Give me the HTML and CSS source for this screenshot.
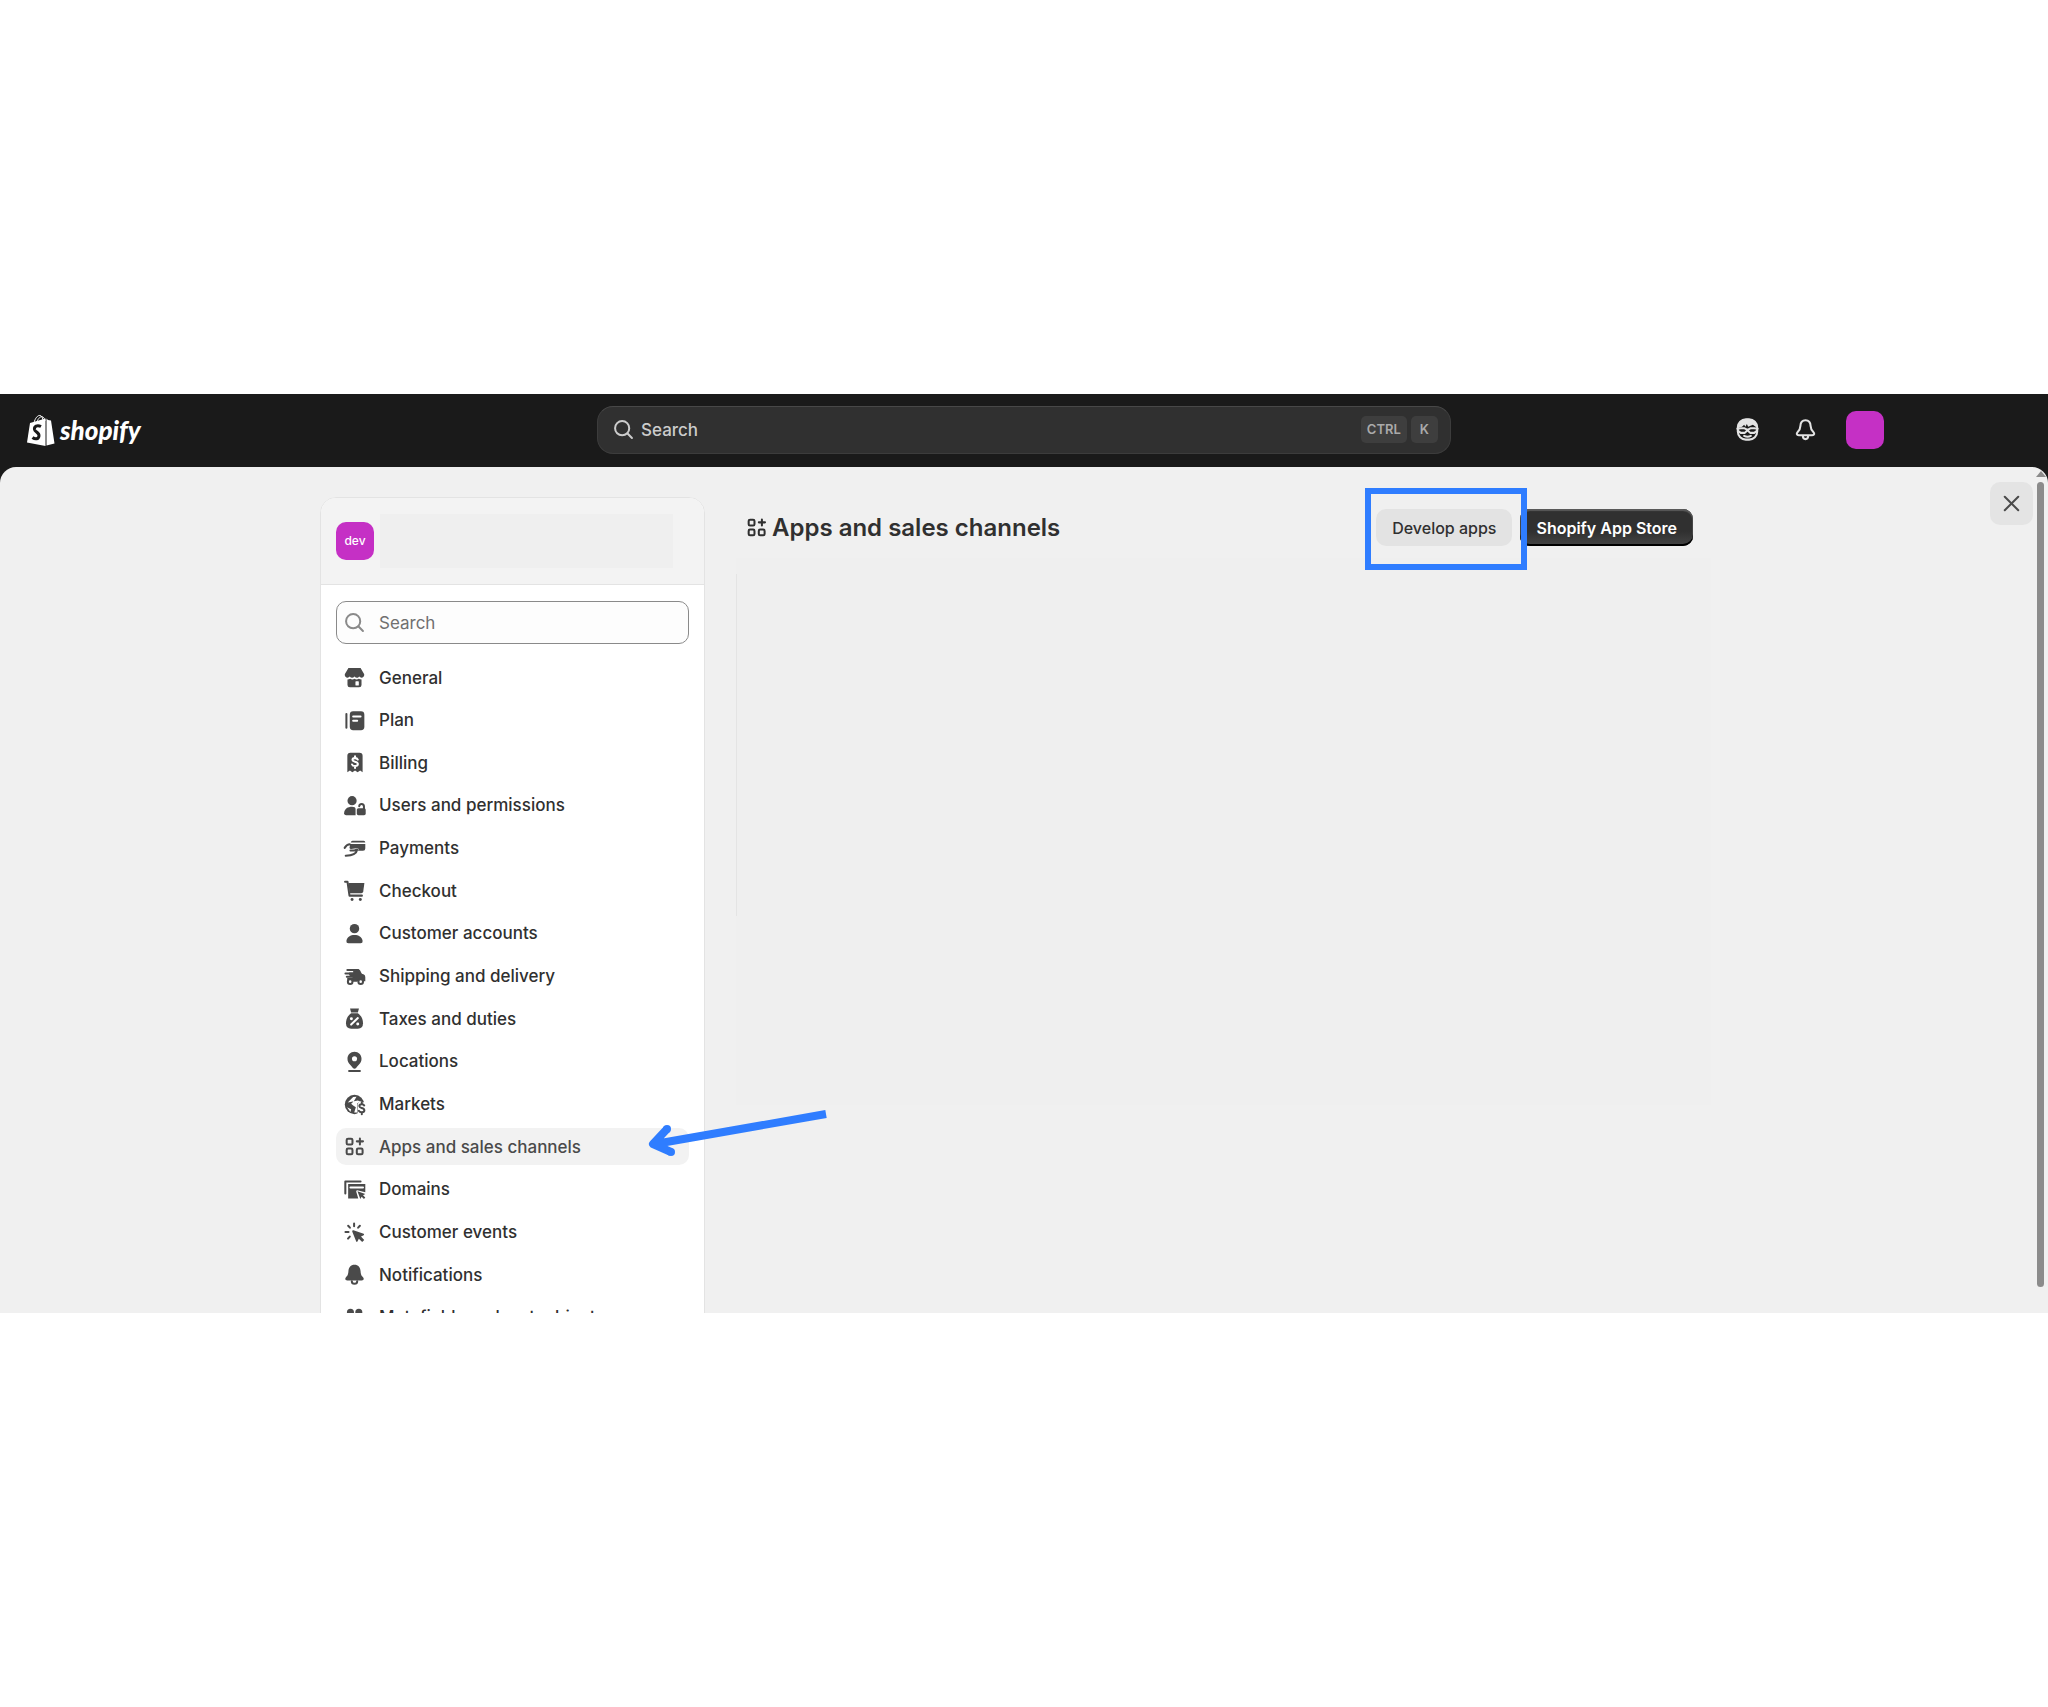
FILE: index.html
```html
<!DOCTYPE html>
<html lang="en">
<head>
  <meta charset="UTF-8" />
  <meta name="viewport" content="width=device-width, initial-scale=1.0"/>
  <title>Apps and sales channels</title>
  <link rel="stylesheet" href="styles.css">
</head>
<body>
  <div class="frame">
    <!-- Top Bar -->
    <header class="topbar">
      <a href="#" class="logo">
        <svg class="logo-bag" viewBox="0 0 28 32" aria-hidden="true">
          <path d="M7 9C8 4 11 1 13 1.500C15 2 16 4 16 8M10 8C11 4 14 2 16 3C17 4 18 5 18 7" fill="none" stroke="#fff" stroke-width="1"/>
          <path d="M3 9L18.500 4.500V32L0 28.500Z" fill="#fff"/>
          <path d="M19.500 4.500L21 6L24 6.500L27.500 29.500L19.500 31.500Z" fill="#fff"/>
          <path d="M14 12.500C10 10.500 7 12.500 7.500 15.500C8 18 12.500 18.500 12 22C11.500 25.500 8 25.500 5.500 23.500" fill="none" stroke="#1a1a1a" stroke-width="3"/>
        </svg>
        <span class="logo-text">shopify</span>
      </a>
      <button class="top-search" type="button">
        <svg class="icon" viewBox="0 0 20 20" aria-hidden="true"><circle cx="9" cy="9" r="5.250" class="line"/><path d="M13 13L16.250 16.250" class="line"/></svg>
        <span class="top-search-label">Search</span>
        <kbd>CTRL</kbd>
        <kbd>K</kbd>
      </button>
      <div class="top-actions">
        <button class="icon-button" type="button" aria-label="Assistant">
          <svg class="icon" viewBox="0 0 20 20" aria-hidden="true">
            <rect x="2.800" y="2.500" width="14.400" height="15" rx="6" class="line"/>
            <path d="M2.500 9V8C3 4 6 2 10 2S17 4 17.500 8V9L14 6.500L10.500 8L9.500 6L8.500 8L7.500 6.500L6 8Z"/>
            <path d="M2.500 9.500L5 9H7.500L10 10.300L12.500 9H15L17.500 9.500M10 10.500L8 12.500H5L3 11M10 10.500L12 12.500H15L17 11M7.500 14.700Q10 16 12.500 14.700" class="line"/>
          </svg>
        </button>
        <button class="icon-button" type="button" aria-label="Alerts">
          <svg class="icon" viewBox="0 0 20 20" aria-hidden="true">
            <path d="M10 3.200C7.500 3.200 6.300 5 6.200 7.500C6.100 10 5.500 10.500 4.200 11.800C3 13 3.500 14.200 5 14.200H15C16.500 14.200 17 13 15.800 11.800C14.500 10.500 13.900 10 13.800 7.500C13.700 5 12.500 3.200 10 3.200ZM8 14.500C8 18 12 18 12 14.500" class="line"/>
          </svg>
        </button>
        <button class="avatar" type="button" aria-label="Account"></button>
      </div>
    </header>

    <!-- Settings Panel -->
    <div class="panel">
      <div class="layout">
        <aside class="sidebar">
          <div class="store">
            <span class="avatar">dev</span>
            <span class="store-name"></span>
          </div>
          <label class="side-search">
            <svg class="icon" viewBox="0 0 20 20" aria-hidden="true"><circle cx="9" cy="9" r="5.250" class="line"/><path d="M13 13L16.250 16.250" class="line"/></svg>
            <input type="search" placeholder="Search" aria-label="Search">
          </label>
          <nav class="menu">
            <a href="#">
              <svg class="icon" viewBox="0 0 20 20" aria-hidden="true"><path d="M5.500 3H14.500L17.200 7.500C17.500 10 14.800 11 13.500 9.300C12.500 10.700 11 10.500 10 9.300C9 10.500 7.500 10.700 6.500 9.300C5.200 11 2.500 10 2.800 7.500Z"/><path d="M4.800 11.500Q6 11.500 6.800 11Q8.500 12 10 11Q11.500 12 13.200 11Q14 11.500 15.200 11.500V15.500Q15.200 17.300 13.400 17.300H6.600Q4.800 17.300 4.800 15.500Z"/><rect x="10.700" y="12.700" width="2.500" height="3.300" rx="0.500" class="cut"/></svg>
              General
            </a>
            <a href="#">
              <svg class="icon" viewBox="0 0 20 20" aria-hidden="true"><rect x="6.500" y="3.200" width="10.800" height="14" rx="2.500"/><path d="M4 5.200V15.300" class="line"/><path d="M9 7H14.500M9 10.200H12" class="cut-line"/></svg>
              Plan
            </a>
            <a href="#">
              <svg class="icon" viewBox="0 0 20 20" aria-hidden="true"><path d="M4.700 5Q4.700 2.800 7 2.800H13.700Q16 2.800 16 5V17.300L14.200 16L12.300 17.300L10.400 16L8.400 17.300L6.600 16L4.700 17.300Z"/><path d="M12.400 7.800C11.800 6.400 8.500 6.300 8.500 8.200C8.500 9.900 12.500 9 12.500 11.200C12.500 13.200 8.700 13 8.200 11.500M10.400 5.300V6.500M10.400 12.900V14" class="cut-line"/></svg>
              Billing
            </a>
            <a href="#">
              <svg class="icon" viewBox="0 0 20 20" aria-hidden="true"><circle cx="8.200" cy="6.400" r="3.400"/><path d="M2.300 15.700C2.500 12.500 5 11 8.200 11C9.800 11 10.800 11.500 10.800 12.500V17.200H3.800Q2.300 17.200 2.300 15.700Z"/><rect x="11.700" y="12" width="6.600" height="5.200" rx="1.200"/><path d="M13.500 10.500C13.500 8.400 17 8.400 17 10.800V12.500" class="line"/></svg>
              Users and permissions
            </a>
            <a href="#">
              <svg class="icon" viewBox="0 0 20 20" aria-hidden="true"><path d="M8.500 4.300H16.800Q18 4.300 18 5.500H7.200Q7.500 4.300 8.500 4.300ZM6.500 6.700H18V10Q18 11.700 16.300 11.700H12.500C13.500 10.500 13 9.600 11.500 9.800L7.500 10.300C6.500 10.400 6 9.500 6.500 8.500Z"/><path d="M2.700 9.500C4 7.500 5 6.900 6.500 6.900M7 11.500H10L12 10.800C11.500 14 7.500 15.200 3.500 15.300" class="line"/></svg>
              Payments
            </a>
            <a href="#">
              <svg class="icon" viewBox="0 0 20 20" aria-hidden="true"><path d="M5.500 4.500H17.300L16.500 10.800Q16.300 12 15 12H6.500Z"/><path d="M3 3.500H4.800L6.300 13.800H15.500" class="line"/><circle cx="8.200" cy="16.600" r="1.100"/><circle cx="14.300" cy="16.600" r="1.100"/></svg>
              Checkout
            </a>
            <a href="#">
              <svg class="icon" viewBox="0 0 20 20" aria-hidden="true"><circle cx="10" cy="6.400" r="3.500"/><path d="M4 15.500C4.500 12.500 7 11.200 10 11.200S15.500 12.500 16 15.500Q16.200 17.200 14.500 17.200H5.500Q3.800 17.200 4 15.500Z"/></svg>
              Customer accounts
            </a>
            <a href="#">
              <svg class="icon" viewBox="0 0 20 20" aria-hidden="true"><path d="M9 4.500H12.500C14 4.500 14.500 6.500 15.500 8L17 8.600Q18 9 18 10.500V13.500H16.500L14.500 11.800L12 13.800H9L7 11.800L5 13.500L4.500 11H9L6 9V7H9Z"/><path d="M4.700 5.200H11M3.300 7.700H9M4.300 10.200H9" class="line"/><circle cx="6.800" cy="13.800" r="1.700" class="wheel"/><circle cx="14.600" cy="13.800" r="1.700" class="wheel"/></svg>
              Shipping and delivery
            </a>
            <a href="#">
              <svg class="icon" viewBox="0 0 20 20" aria-hidden="true"><path d="M6.700 2.500H13.300L12.500 5.500H7.500Z"/><path d="M7.500 6.200H12.500C15 8 16.300 10.500 16.300 13.500Q16.300 17.500 12.500 17.500H7.500Q3.700 17.500 3.700 13.500C3.700 10.500 5 8 7.500 6.200Z"/><path d="M12.500 9.700L7.500 14.500" class="cut-line"/><circle cx="7.700" cy="10.200" r="1.100" class="cut"/><circle cx="12.400" cy="14" r="1.100" class="cut"/></svg>
              Taxes and duties
            </a>
            <a href="#">
              <svg class="icon" viewBox="0 0 20 20" aria-hidden="true"><path d="M10 2.800C7 2.800 4.800 5 4.800 8C4.800 11.500 7.500 12.800 8.800 14.800Q10 16 11.200 14.800C12.500 12.800 15.200 11.500 15.200 8C15.200 5 13 2.800 10 2.800Z"/><circle cx="10" cy="8" r="1.900" class="cut"/><path d="M6 17H14" class="line"/></svg>
              Locations
            </a>
            <a href="#">
              <svg class="icon" viewBox="0 0 20 20" aria-hidden="true"><circle cx="10" cy="10" r="7.200"/><path d="M5 8.500L9 4.500L11.500 4.300L9.500 7.500L7.500 9.500L9 10.800L11 12L9.800 16H12V9L14.500 8L12.500 7Z" class="cut"/><path d="M12.300 9.500L14 7.500L19 9V19H12.300Z" class="cut"/><path d="M4.500 12L7.500 13.500L7 15.500Z" class="cut"/><path d="M17.200 10.700C16.500 9.400 13.500 9.500 13.600 11.300C13.700 13 17.300 12.200 17.300 14.300C17.300 16.300 14 16.200 13.200 14.700M15.400 8.500V9.700M15.400 16V17.300" class="line"/></svg>
              Markets
            </a>
            <a href="#" class="active">
              <svg class="icon" viewBox="0 0 20 20" aria-hidden="true"><path d="M14 4V8.500M11.700 6.200H16.300" class="line"/><rect x="4.200" y="4.200" width="4.300" height="4.300" rx="1" class="line"/><rect x="4.200" y="11.500" width="4.300" height="4.300" rx="1" class="line"/><rect x="11.700" y="11.500" width="4.300" height="4.300" rx="1" class="line"/></svg>
              Apps and sales channels
            </a>
            <a href="#">
              <svg class="icon" viewBox="0 0 20 20" aria-hidden="true"><path d="M3.200 13V4H14.500" class="line"/><path d="M5.300 6H18V12L12 10.500Q11 10.500 11.300 11.700L12.800 16.700H5.300Z"/><path d="M7 8.500H16.300" class="cut-line"/><path d="M12.200 11.300L18 13.300L16.300 14.300L18 16L17 17L15.300 15.300L14.300 17Z"/></svg>
              Domains
            </a>
            <a href="#">
              <svg class="icon" viewBox="0 0 20 20" aria-hidden="true"><path d="M9.200 8.300L16.800 11Q17.500 11.500 16.800 12L14.800 13L17.200 15.500L15.700 17L13.200 14.700L12.200 16.700Q11.600 17.300 11.200 16.500L8.300 9.200Q8.200 8.200 9.200 8.300Z"/><path d="M9.700 3.300V5.300M5.300 5L6.600 6.400M3.300 9.700H5.600M6.500 13L5.200 14.500M12.700 6.400L14 5" class="line"/></svg>
              Customer events
            </a>
            <a href="#">
              <svg class="icon" viewBox="0 0 20 20" aria-hidden="true"><path d="M10 2.800C7.200 2.800 5.700 4.800 5.500 7.500C5.300 10 5 10.500 3.700 12C2.700 13.200 3.200 14.400 4.700 14.400H15.300C16.800 14.400 17.300 13.200 16.300 12C15 10.500 14.700 10 14.500 7.500C14.300 4.800 12.800 2.800 10 2.800Z"/><path d="M8 15C8 17.500 12 17.500 12 15" class="line"/></svg>
              Notifications
            </a>
            <a href="#">
              <svg class="icon" viewBox="0 0 20 20" aria-hidden="true"><circle cx="7" cy="6.200" r="2.600"/><circle cx="13.200" cy="6.200" r="2.600"/><circle cx="7" cy="13" r="2.600"/><circle cx="13.200" cy="13" r="2.600"/></svg>
              Metafields and metaobjects
            </a>
          </nav>
        </aside>

        <main class="content">
          <div class="content-head">
            <h1>
              <svg class="icon" viewBox="0 0 20 20" aria-hidden="true"><path d="M14 4V8.500M11.700 6.200H16.300" class="line"/><rect x="4.200" y="4.200" width="4.300" height="4.300" rx="1" class="line"/><rect x="4.200" y="11.500" width="4.300" height="4.300" rx="1" class="line"/><rect x="11.700" y="11.500" width="4.300" height="4.300" rx="1" class="line"/></svg>
              Apps and sales channels
            </h1>
            <div class="marked">
              <button class="button" type="button">Develop apps</button>
              <span class="marker"></span>
            </div>
            <button class="button primary" type="button">Shopify App Store</button>
          </div>
          <section class="apps"></section>
        </main>
      </div>

      <button class="close" type="button" aria-label="Close">
        <svg class="icon" viewBox="0 0 20 20" aria-hidden="true"><path d="M5 5L15 15M15 5L5 15" class="line"/></svg>
      </button>
      <div class="scrollbar">
        <span class="scroll-up"></span>
        <span class="scroll-thumb"></span>
      </div>

      <!-- Arrow pointing at the active menu item -->
      <svg class="arrow" viewBox="0 0 180 34" aria-hidden="true">
        <path d="M177 4L6 34M18 19L4 34L22 42" fill="none" stroke="#2f7dff" stroke-width="8" stroke-linejoin="round"/>
        <circle cx="18" cy="19" r="4" fill="#2f7dff"/>
        <circle cx="22" cy="42" r="4" fill="#2f7dff"/>
      </svg>
    </div>
  </div>
</body>
</html>
```

FILE: styles.css
```css
/* Basic Reset */
* {
  margin: 0;
  padding: 0;
  box-sizing: border-box;
}

body {
  background: #fff;
  color: #303030;
  font-family: Inter, 'Liberation Sans', sans-serif;
  font-size: 17px;
  font-weight: 500;
  min-height: 100vh;
  display: flex;
  flex-direction: column;
  justify-content: center;
}

button,
input {
  font: inherit;
  color: inherit;
  border: 0;
  background: none;
}

button {
  cursor: pointer;
}

a {
  color: inherit;
  text-decoration: none;
}

/* Icons */
.icon {
  width: 27px;
  height: 27px;
  flex: none;
  fill: currentColor;
  overflow: visible;
}

.line,
.cut-line,
.wheel {
  fill: none;
  stroke: currentColor;
  stroke-width: 1.5;
  stroke-linecap: round;
  stroke-linejoin: round;
}

.cut {
  fill: #fff;
}

.cut-line {
  stroke: #fff;
}

.wheel {
  fill: #fff;
}

.frame {
  width: 100%;
  aspect-ratio: 2048 / 919;
  background: #1a1a1a;
  overflow: hidden;
  display: flex;
  flex-direction: column;
}

/* Top Bar */
.topbar {
  flex: none;
  height: 73px;
  padding-bottom: 2px;
  display: grid;
  grid-template-columns: 1fr minmax(0, 854px) 1fr;
  align-items: center;
}

.logo {
  display: flex;
  align-items: center;
  gap: 5px;
  padding-left: 27px;
  color: #fff;
}

.logo-bag {
  width: 28px;
  height: 32px;
}

.logo-text {
  font: italic 900 26px/32px Lato, sans-serif;
}

.top-search {
  height: 48px;
  padding: 0 12px;
  display: flex;
  align-items: center;
  gap: 4px;
  background: #303030;
  border: 1px solid #3c3c3c;
  border-top-color: #484848;
  border-radius: 16px;
  color: #ccc;
}

.top-search-label {
  flex: 1;
  text-align: left;
}

kbd {
  height: 27px;
  padding: 0 6px;
  background: #3e3e3e;
  border-radius: 5px;
  color: #aaa;
  font: 600 13px/26px Inter, sans-serif;
}

kbd:last-child {
  padding: 0 9px;
}

.top-actions {
  display: flex;
  justify-content: flex-end;
  align-items: center;
  gap: 24px;
  padding-right: 164px;
}

.icon-button {
  display: flex;
  width: 34px;
  justify-content: center;
  color: #e3e3e3;
}

.avatar {
  flex: none;
  width: 38px;
  height: 38px;
  border-radius: 10px;
  background: #c530c5;
  color: #fff;
  font-size: 12px;
  line-height: 37px;
  text-align: center;
}

/* Panel */
.panel {
  position: relative;
  flex: 1;
  min-height: 0;
  overflow: hidden;
  padding: 30px 17px 0 0;
  background: #f0f0f0;
  border-radius: 16px 16px 0 0;
}

.layout {
  max-width: 1391px;
  margin: 0 auto;
  display: grid;
  grid-template-columns: 385px 1fr;
  gap: 31px;
  align-items: start;
}

/* Sidebar */
.sidebar {
  background: #fff;
  border: 1px solid #e3e3e3;
  border-radius: 16px;
  overflow: hidden;
}

.store {
  height: 87px;
  padding: 0 15px;
  display: flex;
  align-items: center;
  gap: 6px;
  background: #f3f3f3;
  border-bottom: 1px solid #e3e3e3;
}

.store-name {
  width: 293px;
  height: 54px;
  background: #efefef;
}

.side-search {
  height: 43px;
  margin: 16px 15px 0;
  padding-left: 4px;
  display: flex;
  align-items: center;
  gap: 11px;
  background: #fdfdfd;
  border: 1px solid #8a8a8a;
  border-radius: 10px;
  color: #8a8a8a;
}

.side-search input {
  flex: 1;
  min-width: 0;
  height: 100%;
  outline: 0;
  font-weight: 400;
}

.side-search input::placeholder {
  color: #707070;
  opacity: 1;
}

.menu {
  height: 677px;
  margin: 15px;
  display: flex;
  flex-direction: column;
  justify-content: space-between;
}

.menu a {
  height: 37px;
  padding-left: 5px;
  display: flex;
  align-items: center;
  gap: 11px;
  border-radius: 10px;
}

.menu .icon {
  color: #4a4a4a;
}

.menu .active {
  background: #f2f2f2;
  color: #4a4a4a;
}

/* Content */
.content-head {
  padding: 12px 18px 12px 7px;
  display: flex;
  align-items: center;
  gap: 8px;
}

h1 {
  flex: 1;
  display: flex;
  align-items: center;
  gap: 2px;
  font-size: 24px;
  font-weight: 600;
}

.button {
  height: 37px;
  padding: 0 16px;
  background: #e3e3e3;
  border-radius: 10px;
  font-size: 16px;
  white-space: nowrap;
}

.primary {
  background: linear-gradient(#303030 60%, #454545);
  box-shadow: inset 0 2px 1px #5a5a5a, inset 0 -2px 0 #000, inset 1px 0 0 #444, inset -1px 0 0 #444;
  color: #fff;
  font-weight: 600;
}

.marked {
  position: relative;
}

.marker {
  position: absolute;
  z-index: 1;
  inset: -21px -15px -24px -11px;
  border: 6px solid #2f7dff;
  pointer-events: none;
}

.apps {
  height: 547px;
  background: linear-gradient(#e4e4e4, #e4e4e4) 0 16px / 1px 342px no-repeat #efefef;
}

.close {
  position: absolute;
  top: 15px;
  right: 15px;
  width: 43px;
  height: 43px;
  display: flex;
  align-items: center;
  justify-content: center;
  background: #e4e4e4;
  border-radius: 10px;
  color: #4a4a4a;
}

/* Scrollbar */
.scrollbar {
  position: absolute;
  top: 4px;
  right: 3px;
  bottom: 26px;
  width: 9px;
  display: flex;
  flex-direction: column;
  align-items: center;
  gap: 5px;
}

.scroll-up {
  border: 5px solid transparent;
  border-top: 0;
  border-bottom: 6px solid #8b8b8b;
}

.scroll-thumb {
  flex: 1;
  width: 7px;
  background: #8b8b8b;
  border-radius: 4px;
}

.arrow {
  position: absolute;
  top: 643px;
  left: 649px;
  width: 180px;
  height: 34px;
  overflow: visible;
}
```
